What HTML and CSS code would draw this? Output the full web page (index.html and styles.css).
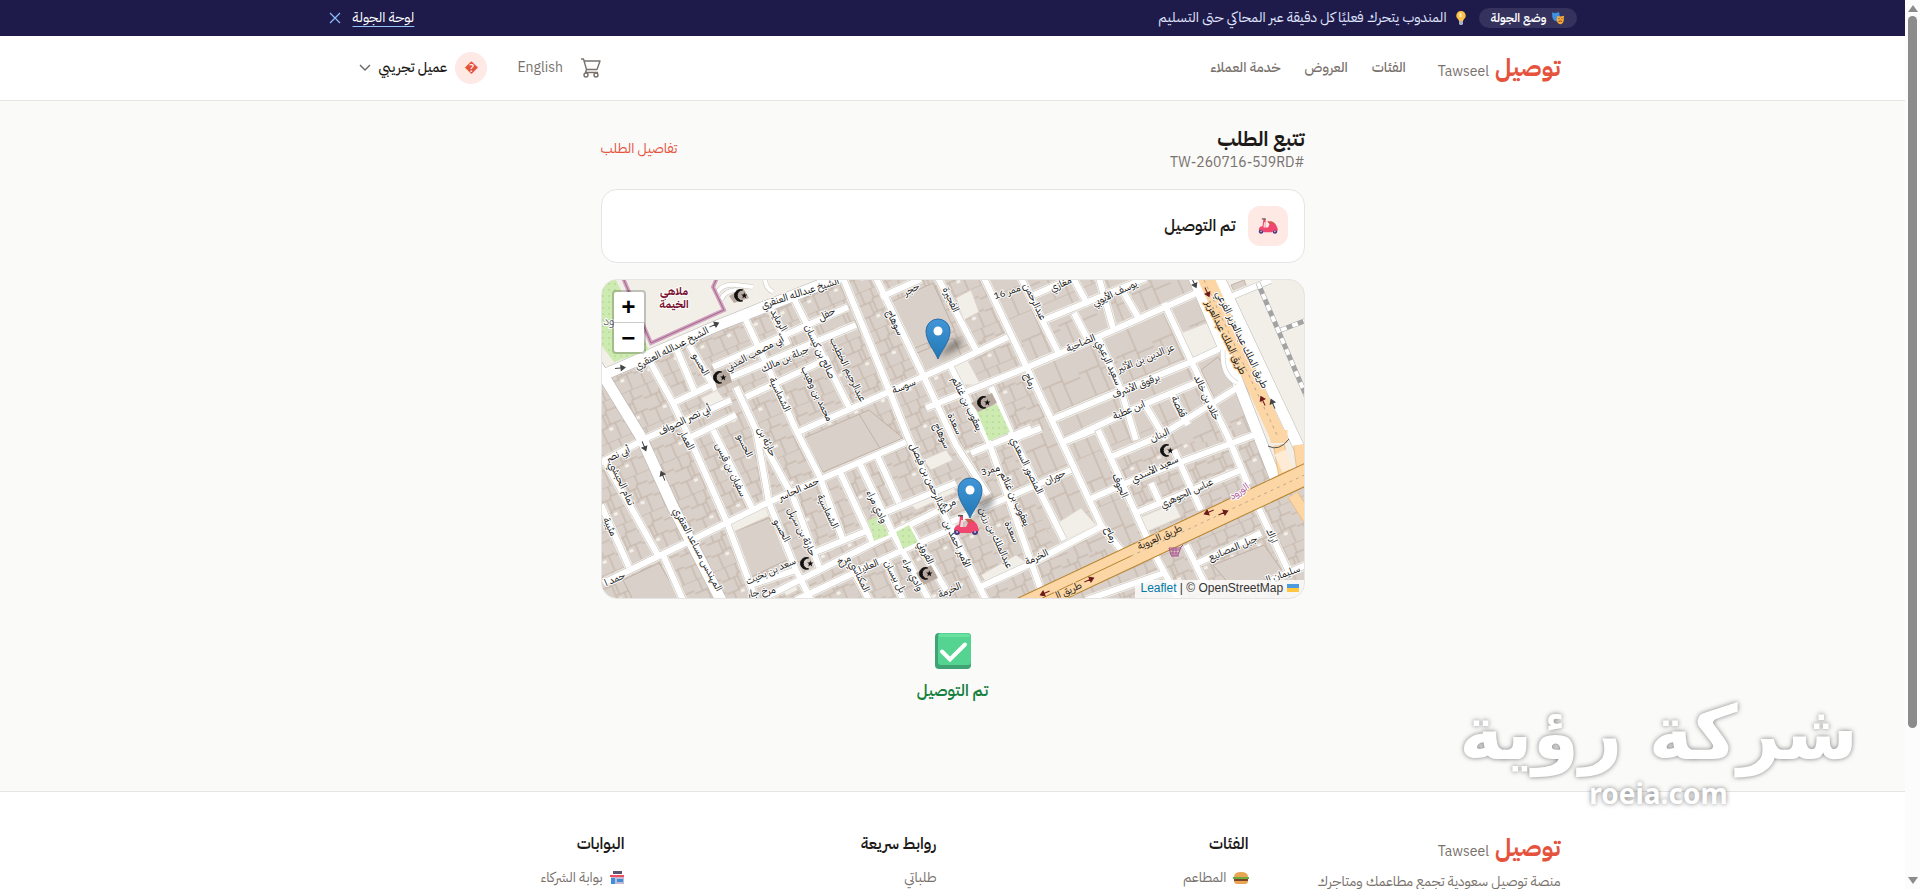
FILE: index.html
```html
<!DOCTYPE html>
<html lang="ar" dir="rtl">
<head>
<meta charset="utf-8">
<title>تتبع الطلب - توصيل</title>
<link rel="stylesheet" href="styles.css">
</head>
<body>
<div class="viewport">
<div class="page">
  <div class="tour">
    <div class="tour-inner">
      <span class="tour-badge">
        <svg width="14" height="14" viewBox="0 0 14 14" aria-hidden="true"><path fill="#3f8fe0" d="M1 1.500q3.500 1 7-.5l1 5q-.5 4-3.500 4.500Q2 9.500 1.300 6z"/><path fill="#f5a83b" d="M6 5q3 1 7-.3l-.3 5q-.7 3.300-3.500 3.500Q6 12.500 5.700 9z"/><path fill="none" stroke="#7a4a12" d="M7.500 10.500q1.800-1.300 3.500 0M7.500 7.500h1M10.500 7.500h1"/></svg>
        وضع الجولة
      </span>
      <span class="tour-text">
        <svg width="12" height="16" viewBox="0 0 12 16" aria-hidden="true"><path fill="#fbc04d" d="M6 1a4.500 4.500 0 0 1 3 8l-1 2H4L3 9a4.500 4.500 0 0 1 3-8z"/><path fill="#fff0b0" d="M4.500 3h2v4h-2z"/><path fill="#aab0bd" d="M4 11h4v3l-1 1H5l-1-1z"/></svg>
        المندوب يتحرك فعليًا كل دقيقة عبر المحاكي حتى التسليم
      </span>
      <a class="tour-link" href="#tour">لوحة الجولة</a>
      <button class="icon-button" type="button" aria-label="إغلاق">
        <svg width="12" height="12" viewBox="0 0 12 12"><path d="M1 1l10 10M11 1L1 11" stroke="#8ebcff" stroke-width="1.200"/></svg>
      </button>
    </div>
  </div>

  <header class="header">
    <div class="header-inner">
      <a class="logo" href="#home"><b>توصيل</b><span lang="en">Tawseel</span></a>
      <nav class="nav">
        <a href="#cats">الفئات</a>
        <a href="#offers">العروض</a>
        <a href="#support">خدمة العملاء</a>
      </nav>
      <div class="actions">
        <button class="icon-button" type="button" aria-label="السلة">
          <svg width="20" height="20" viewBox="0 0 20 20" fill="none" stroke="#78716c" stroke-width="1.400" stroke-linejoin="round"><path d="M0 1h2.500l3 10.500-1 3H17M3.200 3H19l-3 8.500H5.500"/><circle cx="5" cy="17" r="2"/><circle cx="15" cy="17" r="2"/></svg>
        </button>
        <a class="lang" href="#en" lang="en">English</a>
        <button class="account" type="button">
          <span class="avatar">&#xFFFD;</span>
          <span>عميل تجريبي</span>
          <svg width="12" height="8" viewBox="0 0 12 8" fill="none" stroke="#6b6661" stroke-width="1.400"><path d="M1 1l5 5 5-5"/></svg>
        </button>
      </div>
    </div>
  </header>

  <main class="main">
    <div class="title-row">
      <div>
        <h1>تتبع الطلب</h1>
        <p class="order-id">TW-260716-5J9RD#</p>
      </div>
      <a class="details" href="#details">تفاصيل الطلب</a>
    </div>

    <section class="card status">
      <span class="status-icon"><svg width="20" height="16" viewBox="0 0 26 20"><use href="#scooter"/></svg></span>
      <strong>تم التوصيل</strong>
    </section>

    <section class="map" dir="ltr" aria-label="خريطة">
      <svg class="map-canvas" viewBox="601 280 702 318" preserveAspectRatio="xMidYMid slice">
        <defs>
          <pattern id="houses" width="29" height="40" patternUnits="userSpaceOnUse" patternTransform="translate(3 4) rotate(-23)">
            <rect width="29" height="40" fill="#d9d0c9"/>
            <path d="M0 0H29M0 13H17M17 10H29M0 26H14M14 24H29M8 0V13M19 0V10M13 13V26M22 24V40M7 26V40M17 10V24" fill="none" stroke="#c2b2a6"/>
            <path d="M14 27h4v3h-4z" fill="#f2efe9"/>
          </pattern>
          <pattern id="blocks" width="40" height="52" patternUnits="userSpaceOnUse" patternTransform="translate(10 8) rotate(-23)">
            <rect width="40" height="52" fill="#d9d0c9"/>
            <path d="M0 0H40M0 26H22M22 30H40M22 0V52M8 26V52" fill="none" stroke="#c2b2a6"/>
          </pattern>
          <pattern id="trees" width="6" height="6" patternUnits="userSpaceOnUse"><rect width="6" height="6" fill="#cdebb0"/><circle cx="2" cy="2" r=".7" fill="#9fc986"/></pattern>
          <symbol id="mosque" viewBox="0 0 14 12" overflow="visible"><path d="M9 .8A5.500 5.500 0 1 0 9 11 4.600 4.600 0 1 1 9 .8z" stroke="#111" stroke-width=".9"/><path d="M10.500 3l.8 2 2.200.1-1.700 1.400.6 2.200-1.900-1.200-1.800 1.200.6-2.200L7.600 5.100l2.200-.1z"/></symbol>
          <linearGradient id="pinFill" x1="0" y1="0" x2="0" y2="1"><stop offset="0" stop-color="#4296d8"/><stop offset="1" stop-color="#2278b4"/></linearGradient>
          <filter id="soft" x="-50%" y="-50%" width="200%" height="200%"><feGaussianBlur stdDeviation="3"/></filter>
          <g id="pin"><path d="M0-1L9-13q8-8 14-7 3 5-7 12z" opacity=".4" filter="url(#soft)"/><path d="M0 0C-3-8-12-17-12-28a12 12 0 0 1 24 0C12-17 3-8 0 0z" fill="url(#pinFill)" stroke="#2a6ea6"/><circle cx="0" cy="-28" r="4.500" fill="#fff"/></g>
          <g id="scooter"><circle cx="4" cy="17" r="3" fill="#483a7c"/><circle cx="22" cy="17" r="3" fill="#483a7c"/><circle cx="4" cy="17" r="1" fill="#c9c3e5"/><circle cx="22" cy="17" r="1" fill="#c9c3e5"/><path fill="#ef476f" d="M7 1h3v11h3l2-4q-1-3-3-4 10-1 13 8l1 4h-5l-3 2H7q-1-3-6-3 0-4 5-5z"/><path fill="#c9604f" d="M12 4h6l4 3q-4 1-8-1z"/><path fill="#f8d4dd" d="M8 5h2v7H7z"/><path fill="#555" d="M5 0h5v1.500H5z"/></g>
          <path id="arrow" d="M-5 0H3M5 0L1-2.600V2.600z"/>
          <g id="streets">
            <path d="M595 378L615 370 718 325 762 305 842 276M670 404L708 386 855 325M712 367L847 307M595 465L648 437 730 400M690 437L735 415M745 397L828 358M795 433L955 362 1007 337M925 408L1027 367 1097 337 1200 291M1043 320L1145 278M1033 295L1078 275M880 297L920 279M1050 420L1117 392 1190 362 1220 348M1060 443L1137 407 1197 382M1110 457L1157 437 1236 388M1087 500L1137 478 1253 435M1135 513L1240 470M970 453L1030 428M1060 443L1093 430M977 588L1027 565 1103 525M950 522L1070 470M602 583L695 538 768 502 818 480 905 442M750 585L795 570M812 553L868 530M765 597L892 533 955 502M795 600L902 550 955 527M885 512L955 483M1197 563L1260 533M1085 600L1163 573M1270 580L1305 565M1227 298L1270 280M1010 440L1040 428"/>
            <path d="M648 360L672 403 688 437 725 520 755 600M675 348L695 395M688 345L715 390M712 430L752 510M735 387L755 430 768 503 795 570 810 600M742 314L765 363 795 430 818 475 842 540M755 430L792 497 818 567M768 305L787 345M792 297L848 407M842 278L888 390 908 440 955 540 985 600M875 278L922 375 955 445 987 495M937 278L975 350M983 278L1027 370 1060 440 1100 525 1120 550M1020 278L1057 352M1072 278L1087 305M1073 313L1087 340M1098 278L1112 328M1123 293L1137 317M1097 337L1120 390 1135 440M1163 303L1193 367 1227 437 1247 485M1143 403L1165 440M1173 450L1200 510M1170 393L1187 425M1097 430L1147 540M1150 483L1160 505M990 387L1013 440 1063 540M950 367L987 440 1040 590M875 453L898 503M857 460L892 533 928 600M838 470L872 543M885 560L902 600M852 570L868 600M908 527L945 590M600 505L628 567M602 458L658 557M662 555L682 600M1257 507L1287 570M1185 545L1207 590M1153 553L1177 598"/>
          </g>
        </defs>

        <rect x="590" y="270" width="730" height="340" fill="url(#houses)"/>
        <g fill="url(#blocks)">
          <path d="M985 280H1205L1250 400 1225 440 1120 450 1060 440z"/>
          <path d="M1000 430L1090 430 1140 540 1060 560z"/>
        </g>
        <path fill="#f2efe9" d="M1215 270H1310V470L1270 475zM600 270H842V280L762 305 650 352 600 376z"/>
        <g fill="#d9d0c9" stroke="#c2b2a6">
          <path d="M888 303L932 283 954 331 912 349zM803 438L868 410 902 438 822 472zM858 414L880 450M730 533L768 518 790 558 750 577zM622 580L658 563 680 600H632zM1212 565L1263 545 1282 572 1235 592zM1200 370L1217 357 1235 385 1213 397zM1230 285L1243 280 1247 290 1235 295zM914 354L952 338 960 355 926 372z"/>
        </g>
        <g fill="#f2efe9" stroke="#ddd5cc">
          <path d="M1180 333L1208 322 1217 347 1190 360zM1050 527L1080 508 1095 525 1065 540zM1133 520L1173 503 1180 517 1143 533zM725 527L765 508 768 516 730 533zM922 460L945 450 952 460 930 470zM700 398L716 390 725 402 708 410zM955 298L970 290 978 312 963 320zM908 502L950 485 955 492 915 510zM980 575L1015 555 1025 562 985 582zM780 585L792 580 797 590 785 596zM950 365L965 357 980 385 960 385z"/>
        </g>

        <g fill="none" stroke-linejoin="round">
          <use href="#streets" stroke="#f2efe9" stroke-width="9"/>
          <use href="#streets" stroke="#c9c5c0" stroke-width="7"/>
          <path d="M596 365L640 437 672 507 722 604M1193 278L1232 370 1275 480M1218 278L1303 458M595 378L718 325 842 276" stroke="#b8b5b1" stroke-width="12"/>
          <use href="#streets" stroke="#fff" stroke-width="6"/>
          <path d="M596 365L640 437 672 507 722 604M1193 278L1232 370 1275 480M1218 278L1303 458M595 378L718 325 842 276" stroke="#fff" stroke-width="11"/>
          <path d="M716 293q5-10 20-8l16 2M720 300q3-9 15-10M764 278q0 10 8 14M1222 350q-2 25 14 33" stroke="#c9c5c0" stroke-width="5"/>
          <path d="M716 293q5-10 20-8l16 2M720 300q3-9 15-10M764 278q0 10 8 14M1222 350q-2 25 14 33" stroke="#fff" stroke-width="4"/>
          <path d="M1257 283L1306 398M1280 330L1306 320" stroke="#a3a3a3" stroke-width="5"/>
          <path d="M1257 283L1306 398M1280 330L1306 320" stroke="#fff" stroke-width="4" stroke-dasharray="6 6"/>
          <path d="M1278 445L1284 480M1298 445L1302 475M1292 495L1308 520" stroke="#e7c08e" stroke-width="12"/>
          <path d="M1278 445L1284 480M1298 445L1302 475M1292 495L1308 520" stroke="#fdd6a4" stroke-width="10"/>
          <path d="M1010 613L1310 472" stroke="#b5812b" stroke-width="22"/>
          <path d="M1010 613L1310 472" stroke="#fcd6a4" stroke-width="20"/>
          <path d="M1203 274L1277 437" stroke="#fcd6a4" stroke-width="16"/>
          <path d="M1278 430V443" stroke="#fcd6a4" stroke-width="17"/>
          <path d="M1010 613L1130 556" stroke="#b5812b"/>
          <path d="M1130 556L1310 472M1203 280L1277 437" stroke="#bba98f" stroke-dasharray="3 4"/>
          <path d="M1279 452L1287 470" stroke="#fdebd6" stroke-width="12"/>
          <path d="M1267 446q11 6 21-7" stroke="#555"/>
        </g>

        <g fill="url(#trees)">
          <path d="M600 278H614L648 350 613 362 600 345zM976 412L996 404 1009 432 988 441zM867 520L878 517 888 535 873 541zM895 532L908 525 917 542 902 549z"/>
        </g>
        <path d="M970 403L991 393 996 403 977 412zM712 375L727 368 731 382 716 389zM728 296L742 288 748 298 733 303zM915 573L930 565 937 578 922 585z" fill="#b8aaa0"/>
        <path d="M622 278L650 343 723 310 712 287 716 278" fill="none" stroke="#cfa3bd" stroke-width="4"/>
        <path d="M622 278L650 343 723 310 712 287 716 278" fill="none" stroke="#a8648f"/>

        <g fill="#444" stroke="#444">
          <use href="#arrow" transform="translate(619 368) rotate(-5)"/><use href="#arrow" transform="translate(713 325) rotate(-25)"/>
          <use href="#arrow" transform="translate(643 446) rotate(68)"/><use href="#arrow" transform="translate(662 476) rotate(-113)"/>
          <use href="#arrow" transform="translate(1272 404) rotate(-113)"/><use href="#arrow" transform="translate(1193 283) rotate(65)"/>
        </g>
        <g fill="#6b1a1a" stroke="#6b1a1a">
          <use href="#arrow" transform="translate(1206 292) rotate(65)"/><use href="#arrow" transform="translate(1262 401) rotate(-115)"/>
          <use href="#arrow" transform="translate(1208 512) rotate(157)"/><use href="#arrow" transform="translate(1222 513) rotate(-23)"/>
          <use href="#arrow" transform="translate(1044 593) rotate(157)"/><use href="#arrow" transform="translate(1088 580) rotate(-23)"/>
        </g>
        <g fill="#111">
          <use href="#mosque" x="732" y="289" width="15" height="13"/><use href="#mosque" x="711" y="371" width="15" height="13"/>
          <use href="#mosque" x="975" y="396" width="15" height="13"/><use href="#mosque" x="1158" y="444" width="15" height="13"/>
          <use href="#mosque" x="798" y="557" width="15" height="13"/><use href="#mosque" x="917" y="567" width="15" height="13"/>
        </g>
        <path d="M1182 545l-2 2-3 8h-7l-2-7h12M1169 550h10M1170 553h8M1172 548v6M1175 548v6M1170 556h8" fill="none" stroke="#a8508f"/>

        <g class="street-labels" direction="rtl">
          <text transform="translate(800 296) rotate(-18)">الشيخ عبدالله العنقري</text>
          <text transform="translate(672 351) rotate(-27)">الشيخ عبدالله العنقري</text>
          <text transform="translate(827 317) rotate(-28)">حفل</text>
          <text transform="translate(912 292) rotate(-28)">حجر</text>
          <text transform="translate(755 356) rotate(-28)">أبي مصعب المدني</text>
          <text transform="translate(785 362) rotate(-24)">جبلة بن مالك</text>
          <text transform="translate(904 389) rotate(-23)">سوسة</text>
          <text transform="translate(685 423) rotate(-26)">أبي نصر الصواف</text>
          <text transform="translate(1007 295) rotate(-18)">ممر 16</text>
          <text transform="translate(1061 287) rotate(-24)">مغازي</text>
          <text transform="translate(1115 296) rotate(-25)">يوسف الأيوبي</text>
          <text transform="translate(1081 346) rotate(-23)">الضاحية</text>
          <text transform="translate(1146 361) rotate(-22)">عز الدين بن الأثير</text>
          <text transform="translate(1136 389) rotate(-22)">برقوق الأشرف</text>
          <text transform="translate(1129 413) rotate(-23)">ابن عطية</text>
          <text transform="translate(1160 438) rotate(-24)">البنان</text>
          <text transform="translate(1155 472) rotate(-25)">سعيد الأسدي</text>
          <text transform="translate(1187 496) rotate(-25)">عباس الجوهري</text>
          <text class="pink" transform="translate(1240 494) rotate(-35)">الورود</text>
          <text class="on-road" transform="translate(1160 540) rotate(-24)">طريق العروبة</text>
          <text class="on-road" transform="translate(1067 594) rotate(-24)">طريق ال</text>
          <text transform="translate(1233 551) rotate(-23)">جبل المصانيع</text>
          <text transform="translate(1281 578) rotate(-20)">سليمان ال</text>
          <text transform="translate(1055 480) rotate(-26)">حوران</text>
          <text transform="translate(990 473) rotate(-15)">ممر3</text>
          <text transform="translate(1037 560) rotate(-26)">الخرمة</text>
          <text transform="translate(799 492) rotate(-24)">حمد الجاسر</text>
          <text transform="translate(618 457) rotate(-24)">أبي نصر</text>
          <text transform="translate(615 582) rotate(-24)">حمد ا</text>
          <text transform="translate(771 574) rotate(-24)">سعد بن بخيت</text>
          <text transform="translate(844 563) rotate(-22)">مرخ</text>
          <text transform="translate(869 569) rotate(-24)">العلايا</text>
          <text transform="translate(761 595) rotate(-10)">مرخ جار</text>
          <text transform="translate(949 507) rotate(-24)">مرخ</text>
          <text transform="translate(950 593) rotate(-24)">الخرمة</text>
          <text transform="translate(891 324) rotate(63)">سوهاج</text>
          <text transform="translate(947 301) rotate(65)">الفجيرة</text>
          <text transform="translate(775 322) rotate(60)">الرمايد</text>
          <text transform="translate(816 353) rotate(64)">صالح بن كيسان</text>
          <text transform="translate(844 371) rotate(64)">عبدالرحيم الخطيب</text>
          <text transform="translate(813 395) rotate(64)">محمد بن وهيب</text>
          <text transform="translate(776 396) rotate(64)">الشماسية</text>
          <text transform="translate(697 366) rotate(60)">الحسو</text>
          <text transform="translate(1031 303) rotate(64)">عبدالرحمن</text>
          <text transform="translate(1026 382) rotate(66)">رماح</text>
          <text transform="translate(1105 364) rotate(65)">سعيد الرعيني</text>
          <text transform="translate(963 405) rotate(64)">يعقوب بن غنائم</text>
          <text transform="translate(1203 399) rotate(65)">خلاد بن خالد</text>
          <text transform="translate(1175 408) rotate(65)">قفصة</text>
          <text class="on-road" transform="translate(1222 339) rotate(64)">طريق الملك عبدالعزيز</text>
          <text transform="translate(1238 341) rotate(64)">طريق الملك عبدالعزيز الفرعي</text>
          <text transform="translate(683 442) rotate(62)">العمار</text>
          <text transform="translate(727 471) rotate(64)">سفيان بن قيس</text>
          <text transform="translate(741 447) rotate(64)">الحسو</text>
          <text transform="translate(763 443) rotate(64)">حارثة بن</text>
          <text transform="translate(618 485) rotate(65)">تمام الحبشي</text>
          <text transform="translate(606 528) rotate(65)">مثيبة</text>
          <text transform="translate(694 551) rotate(62)">المهندس مساعد العنقري</text>
          <text transform="translate(778 532) rotate(62)">الحسو</text>
          <text transform="translate(798 533) rotate(64)">حارثة بن سهل</text>
          <text transform="translate(824 513) rotate(64)">الشماسية</text>
          <text transform="translate(873 508) rotate(64)">وادي مراء</text>
          <text transform="translate(925 480) rotate(65)">عبدالرحمن بن فيصل</text>
          <text transform="translate(953 545) rotate(65)">الأمير احمد بن</text>
          <text transform="translate(938 437) rotate(64)">سوهاج</text>
          <text transform="translate(922 554) rotate(64)">الفروثي</text>
          <text transform="translate(909 576) rotate(64)">وادي مراء</text>
          <text transform="translate(856 578) rotate(64)">المكناسي</text>
          <text transform="translate(891 578) rotate(62)">بل بيسان</text>
          <text transform="translate(1023 467) rotate(64)">المنصور السعدي</text>
          <text transform="translate(1011 500) rotate(65)">يعقوب بن غنائم</text>
          <text transform="translate(1008 533) rotate(64)">سعدة</text>
          <text transform="translate(951 425) rotate(64)">سعدة</text>
          <text transform="translate(992 539) rotate(65)">عبدالملك بن رزين</text>
          <text transform="translate(1107 536) rotate(64)">رماح</text>
          <text transform="translate(1116 487) rotate(66)">الجوف</text>
          <text transform="translate(1268 537) rotate(66)">اراك</text>
          <text class="place" x="673" y="295">ملاهي</text>
          <text class="place" x="673" y="308">الخيمة</text>
          <text class="park" x="608" y="325">ود</text>
        </g>
        <use href="#scooter" x="952" y="515"/>
        <use href="#pin" x="937" y="359"/>
        <use href="#pin" x="969" y="518"/>
      </svg>
      <div class="zoom">
        <button type="button" aria-label="تكبير">+</button>
        <button type="button" aria-label="تصغير">−</button>
      </div>
      <div class="credit">
        <a href="#leaflet">Leaflet</a> | © OpenStreetMap
        <svg width="12" height="8" viewBox="0 0 12 8" aria-hidden="true"><path fill="#4c9be0" d="M0 0h12v4H0z"/><path fill="#ffc640" d="M0 4h12v4H0z"/></svg>
      </div>
    </section>

    <section class="done">
      <svg width="36" height="36" viewBox="0 0 36 36" aria-hidden="true"><rect width="36" height="36" rx="4" fill="#3fa374"/><path d="M6 0h26q4 0 4 4v25q0 3-3 3H6q-3 0-3-3V3q0-3 3-3z" fill="#55d391"/><path d="M4 1h28q3 0 3 3H4z" fill="#68e0a0"/><path d="M7 18.500l8 8L30 11.500" fill="none" stroke="#fff" stroke-width="4" stroke-linecap="round"/></svg>
      <p>تم التوصيل</p>
    </section>
  </main>

  <footer class="footer">
    <div class="footer-inner">
      <div>
        <a class="logo" href="#home"><b>توصيل</b><span lang="en">Tawseel</span></a>
        <p class="about">منصة توصيل سعودية تجمع مطاعمك ومتاجرك المفضلة في مكان واحد</p>
      </div>
      <div>
        <h2>الفئات</h2>
        <a class="footer-link" href="#food"><svg width="16" height="14" viewBox="0 0 16 14" aria-hidden="true"><path fill="#e9a553" d="M1 6q0-5 7-5t7 5z"/><path fill="#6dab3c" d="M0 6h16v2H0z"/><path fill="#7b4528" d="M1 8h14v2H1z"/><path fill="#e9a553" d="M1 10h14q0 3-3 3H4q-3 0-3-3z"/></svg>المطاعم</a>
      </div>
      <div>
        <h2>روابط سريعة</h2>
        <a class="footer-link" href="#orders">طلباتي</a>
      </div>
      <div>
        <h2>البوابات</h2>
        <a class="footer-link" href="#partners"><svg width="16" height="14" viewBox="0 0 16 14" aria-hidden="true"><path fill="#5b5170" d="M4 0h9v3H4z"/><path fill="#c5b9cf" d="M2 5h13v8H2z"/><path fill="#ee4b65" d="M1 4h14v2H1z"/><path fill="#3d8fdd" d="M2 7h4v6H2zM8 8h6v3H8z"/></svg>بوابة الشركاء</a>
      </div>
    </div>
  </footer>
</div>

<div class="scrollbar" aria-hidden="true"><i class="up"></i><span></span><i class="down"></i></div>
<div class="watermark"><b>شركة رؤية</b><span>roeia.com</span></div>
</div>
</body>
</html>
```
FILE: styles.css
```css
* { box-sizing: border-box; }
body {
  margin: 0;
  background: #fafaf9;
  color: #1c1917;
  font-family: "IBM Plex Sans Arabic", "Noto Sans Arabic", "Noto Sans", "DejaVu Sans", sans-serif;
  font-size: 14px;
  line-height: 20px;
}
a { color: inherit; text-decoration: none; }
button { border: 0; padding: 0; background: none; color: inherit; font: inherit; cursor: pointer; }
h1, h2, p { margin: 0; }
svg { flex: none; }

.viewport { position: relative; height: 100vh; overflow: hidden; }
.page { margin-right: 15px; }

.tour { background: #1e1b4b; color: #e0e7ff; }
.tour-inner {
  display: flex;
  align-items: center;
  gap: 12px;
  max-width: 1280px;
  height: 36px;
  margin: 0 auto;
  padding: 0 16px;
}
.tour-badge {
  display: flex;
  align-items: center;
  gap: 4px;
  padding: 0 12px;
  border-radius: 10px;
  background: #35325e;
  color: #fff;
  font-size: 12px;
  font-weight: 600;
}
.tour-text { display: flex; align-items: center; gap: 8px; flex: 1; }
.tour-link { color: #fff; text-decoration: underline; text-decoration-color: #93c5fd; text-underline-offset: 4px; }
.icon-button { display: flex; }

.header { background: #fff; border-bottom: 1px solid #e7e5e4; }
.header-inner {
  display: flex;
  align-items: center;
  max-width: 1280px;
  height: 64px;
  margin: 0 auto;
  padding: 0 32px;
}
.logo { display: inline-flex; align-items: baseline; gap: 6px; line-height: 32px; }
.header .logo { padding-top: 4px; }
.logo b { color: #e5533d; font-size: 24px; }
.logo span { color: #78716c; }
.nav { display: flex; gap: 24px; margin-right: 32px; color: #78716c; font-weight: 500; }
.actions { display: flex; align-items: center; margin-right: auto; }
.lang { margin: 0 18px; color: #78716c; }
.account { display: flex; align-items: center; gap: 8px; padding: 0 12px 0 14px; font-weight: 500; }
.avatar {
  display: grid;
  place-items: center;
  width: 32px;
  height: 32px;
  border-radius: 50%;
  background: #fee9e4;
  color: #e5533d;
}

.main { max-width: 768px; margin: 0 auto; padding: 24px 32px 56px; }
.title-row { display: flex; align-items: center; justify-content: space-between; margin-bottom: 16px; }
h1 { font-size: 20px; line-height: 28px; }
.order-id { color: #78716c; direction: ltr; text-align: right; }
.details { color: #e5533d; }
.card { border: 1px solid #e7e5e4; border-radius: 16px; background: #fff; }
.status { display: flex; align-items: center; gap: 12px; padding: 16px; font-size: 16px; }
.status strong { font-weight: 600; }
.status-icon {
  display: grid;
  place-items: center;
  width: 40px;
  height: 40px;
  border-radius: 12px;
  background: #fee9e4;
}

.map {
  position: relative;
  height: 320px;
  margin-top: 16px;
  border: 1px solid #e7e5e4;
  border-radius: 16px;
  overflow: hidden;
}
.map-canvas { display: block; width: 100%; height: 100%; }
.street-labels { font-size: 10px; fill: #111; text-anchor: middle; }
.street-labels text { paint-order: stroke; stroke: #fff; stroke-width: 2px; stroke-linejoin: round; }
.street-labels .on-road { stroke: #fcd6a4; }
.street-labels .pink { fill: #a8508f; }
.street-labels .place { fill: #7a1330; font-weight: 700; font-size: 11px; }
.street-labels .park { fill: #777; font-size: 12px; }
.zoom {
  position: absolute;
  top: 10px;
  left: 10px;
  border: 2px solid rgba(0, 0, 0, 0.2);
  border-radius: 4px;
  background: #fff;
  background-clip: padding-box;
}
.zoom button {
  display: block;
  width: 30px;
  height: 30px;
  padding-top: 4px;
  color: #000;
  font: bold 24px/24px "Liberation Mono", monospace;
}
.zoom button + button { border-top: 1px solid #ccc; }
.credit {
  position: absolute;
  right: 0;
  bottom: 0;
  padding: 0 5px 2px;
  background: rgba(255, 255, 255, 0.8);
  color: #333;
  font: 12px/16px "Liberation Sans", Arial, sans-serif;
}
.credit a { color: #0078a8; }

.done { padding: 34px 0 32px; text-align: center; }
.done svg { display: block; margin: 0 auto 10px; }
.done p { color: #15803d; font-size: 16px; font-weight: 600; line-height: 24px; }

.footer { border-top: 1px solid #e7e5e4; background: #fff; }
.footer-inner {
  display: grid;
  grid-template-columns: repeat(4, 1fr);
  gap: 32px;
  max-width: 1280px;
  margin: 0 auto;
  padding: 40px 32px;
}
h2 { margin-bottom: 12px; font-size: 16px; line-height: 24px; font-weight: 600; }
.footer-link { display: flex; align-items: center; gap: 6px; color: #78716c; }
.about { max-width: 264px; margin-top: 4px; color: #78716c; }

.scrollbar {
  position: absolute;
  top: 0;
  right: 0;
  bottom: 0;
  display: flex;
  flex-direction: column;
  align-items: center;
  justify-content: space-between;
  width: 15px;
  padding: 5px 0;
  background: #fcfcfc;
}
.scrollbar span { width: 9px; height: 81%; margin-bottom: auto; margin-top: 4px; border-radius: 5px; background: #8b8b8b; }
.scrollbar i { border: 5px solid transparent; }
.scrollbar .up { border-top: 0; border-bottom: 7px solid #8b8b8b; }
.scrollbar .down { border-bottom: 0; border-top: 7px solid #8b8b8b; }

.watermark {
  position: absolute;
  right: 62px;
  bottom: 80px;
  display: flex;
  flex-direction: column;
  align-items: center;
  color: #fff;
  text-shadow: 0 0 5px rgba(0, 0, 0, 0.5);
  pointer-events: none;
}
.watermark b { font: bold 75px/88px "DejaVu Sans", sans-serif; }
.watermark span { font: bold 28px/32px "Noto Sans", sans-serif; }
```
